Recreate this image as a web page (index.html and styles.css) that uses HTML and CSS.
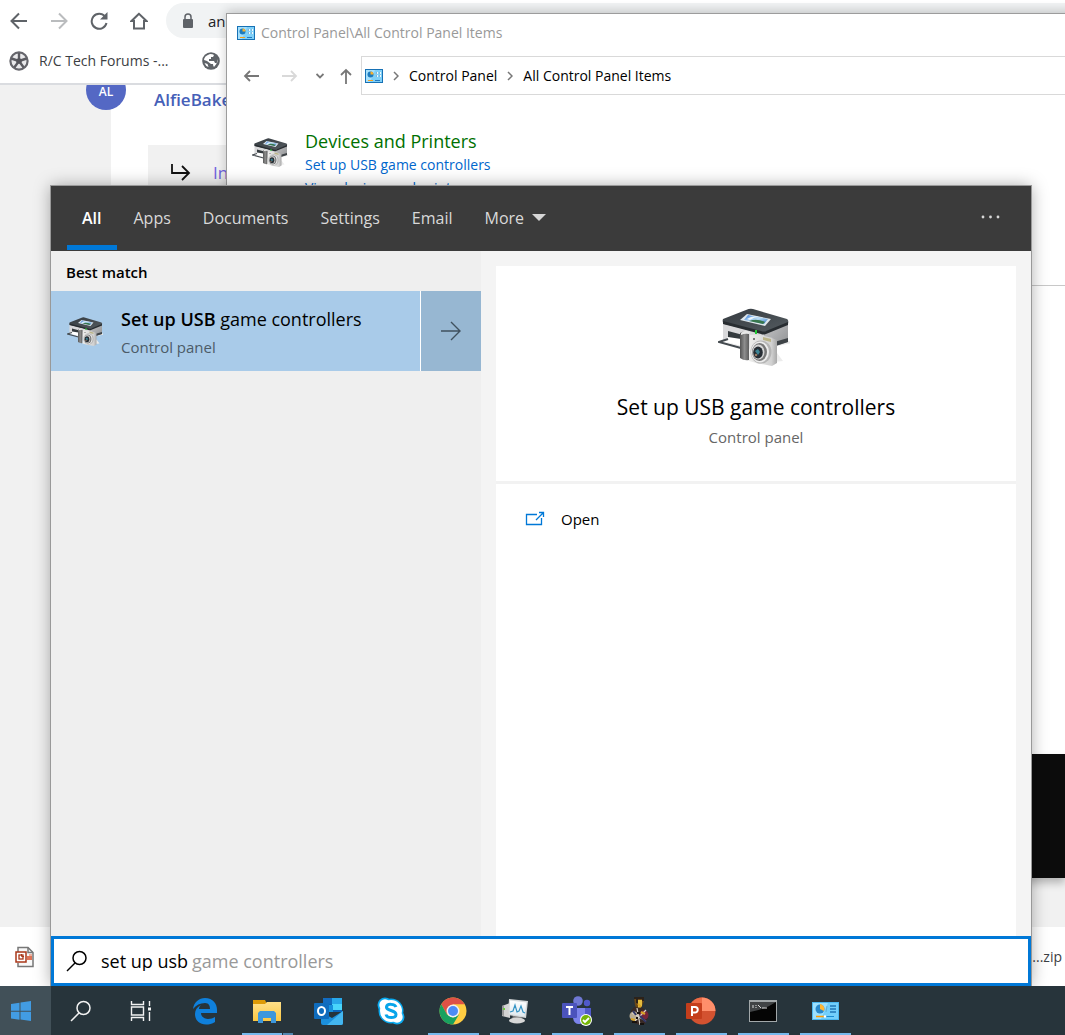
FILE: index.html
```html
<!DOCTYPE html>
<html lang="en">
<head>
<meta charset="utf-8">
<title>Search</title>
<link rel="stylesheet" href="styles.css">
</head>
<body>
<svg class="sprite" aria-hidden="true">
  <defs>
    <linearGradient id="side" x1="0" y1="0" x2="1" y2="1"><stop offset="0" stop-color="#c6c6c8"/><stop offset="1" stop-color="#8e9092"/></linearGradient>
    <linearGradient id="lid" x1="0" y1="0" x2="1" y2="1"><stop offset="0" stop-color="#343a3f"/><stop offset="1" stop-color="#555c61"/></linearGradient>
    <linearGradient id="cam" x1="0" y1="0" x2="1" y2="0"><stop offset="0" stop-color="#eeeeec"/><stop offset=".8" stop-color="#d2d2d2"/><stop offset="1" stop-color="#a9a9a9"/></linearGradient>
    <linearGradient id="grip" x1="0" y1="0" x2="1" y2="0"><stop offset="0" stop-color="#555"/><stop offset=".5" stop-color="#8d8d8d"/><stop offset="1" stop-color="#5d5d5d"/></linearGradient>
    <linearGradient id="sky" x1="0" y1="0" x2="1" y2="1"><stop offset="0" stop-color="#3f7fd6"/><stop offset=".5" stop-color="#b9dcf5"/><stop offset="1" stop-color="#2e74c4"/></linearGradient>
    <linearGradient id="folder" x1="0" y1="0" x2="0" y2="1"><stop offset="0" stop-color="#ffe08a"/><stop offset="1" stop-color="#fbc740"/></linearGradient>
    <linearGradient id="screen" x1="0" y1="0" x2="0" y2="1"><stop offset="0" stop-color="#fff"/><stop offset="1" stop-color="#dfe9ef"/></linearGradient>
  </defs>
  <symbol id="printer" viewBox="0 0 72 60">
    <path d="M38 56l27-3-6-8zM60 38l14-3-6-4z" fill="#ececec"/>
    <path d="M5 15L46 25v21L5 33z" fill="#d9d9db"/>
    <path d="M46 25l24-11v20L46 41z" fill="url(#side)"/>
    <path d="M46 37l24-7v4l-24 8z" fill="#3e4347"/>
    <path d="M5 11L28 2q4-2 7-1l34 10q2 1 1 5L47 24q-3 1-6 0L6 16q-2-2-1-5z" fill="url(#lid)"/>
    <path d="M5 13l38 10q3 1 5 0l22-9v3l-22 9q-3 1-5 0L5 16z" fill="#282d31"/>
    <path d="M29 6l24 5-6 7-25-6z" fill="#dfe7ec"/>
    <path d="M30 7l20 4-4 5-20-4z" fill="url(#sky)"/>
    <path d="M31 13q8-3 16 1l-2 2z" fill="#38774d"/><path d="M29 11q6-4 12-2-5 0-9 3z" fill="#eaf6fd"/>
    <path d="M10 23l15 4v8L10 31z" fill="#343a3e"/>
    <path d="M4 33l19 5v-7l-13-2z" fill="#fff"/>
    <path d="M10 31l-9 3 22 6" fill="none" stroke="#454b50" stroke-width="2.2"/>
    <path d="M38 22v4" stroke="#24cb35" stroke-width="2"/>
    <path d="M22 25q4-3 9-1v28q-5 1-9-2z" fill="url(#grip)"/>
    <path d="M23 25q4-4 9-1l-1 2q-4-1-8 1z" fill="#e8e8e8"/>
    <path d="M32 27q14-1 27 5v23l-5 3q-12-2-23-5z" fill="url(#cam)"/>
    <path d="M45 29l8 2v3l-8-2z" fill="#bbb488"/><circle cx="36" cy="31" r="1" fill="#555"/>
    <ellipse cx="43" cy="44" rx="10.500" ry="11.500" fill="#b5b5b5"/>
    <ellipse cx="42" cy="44" rx="9" ry="10.500" fill="#ececec"/>
    <ellipse cx="41.500" cy="44" rx="7.500" ry="9" fill="#777"/>
    <ellipse cx="40.500" cy="44" rx="6" ry="7.500" fill="#d4d4d4"/>
    <ellipse cx="40" cy="44.500" rx="4.800" ry="6" fill="#262d34"/>
    <path d="M37 43l3-2 2 3-2 3z" fill="#3c8494"/><circle cx="38" cy="47" r="1.300" fill="#9a7b64"/>
  </symbol>
  <symbol id="panel" viewBox="0 0 18 14">
    <path d="M0 0h18v14H0z" fill="#1771b5"/><path d="M1 1h16v12H1z" fill="#7fd0f8"/><path d="M1 1h9L5 13H1z" fill="#a5e0fc"/>
    <circle cx="5.500" cy="5.500" r="3" fill="#1c7bbf"/><path d="M5.500 5.500V2.500a3 3 0 0 1 3 3z" fill="#fbb22d"/>
    <path d="M11 3h2v2h-2zM14 3h2v2h-2zM11 6h2v2h-2zM14 6h2v2h-2z" fill="#eefaff"/><path d="M11 4h1M14 4h1M11 7h1M14 7h1" stroke="#1771b5"/>
    <path d="M3 11.500h5" stroke="#f6a21d"/><path d="M10 11.500h5" stroke="#2379c0"/>
  </symbol>
  <symbol id="glass" viewBox="0 0 22 22">
    <circle cx="13.500" cy="8" r="6.500" fill="none" stroke="currentColor" stroke-width="1.500"/><path d="M9 13l-8 8" stroke="currentColor" stroke-width="1.500"/>
  </symbol>
</svg>

<div class="desktop">
  <main class="workspace">
    <section class="browser" aria-label="Browser">
      <div class="toolbar">
        <button class="icon-btn" aria-label="Back"><svg width="18" height="18" viewBox="0 0 18 18"><path d="M17 9H2M9 1.500L1.500 9 9 16.500" fill="none" stroke="#5f6368" stroke-width="2"/></svg></button>
        <button class="icon-btn" aria-label="Forward"><svg width="18" height="18" viewBox="0 0 18 18"><path d="M1 9h15M9 1.500L16.500 9 9 16.500" fill="none" stroke="#babcbe" stroke-width="2"/></svg></button>
        <button class="icon-btn" aria-label="Reload"><svg width="18" height="18" viewBox="0 0 18 18"><path d="M15 4.500A7.500 7.500 0 1 0 16.500 11" fill="none" stroke="#5f6368" stroke-width="2"/><path d="M17.500 0v7.500H10z" fill="#5f6368"/></svg></button>
        <button class="icon-btn" aria-label="Home"><svg width="18" height="18" viewBox="0 0 18 18"><path d="M9 1.800L1.500 9H4v7.500h10V9h2.500z" fill="none" stroke="#5f6368" stroke-width="2"/></svg></button>
        <div class="omnibox"><svg width="12" height="16" viewBox="0 0 12 16"><rect x="1" y="6" width="10" height="9" rx="1" fill="#5f6368"/><path d="M3 6V4a3 3 0 0 1 6 0v2" fill="none" stroke="#5f6368" stroke-width="1.500"/></svg><span>an</span></div>
      </div>
      <div class="bookmarks">
        <a class="bookmark" href="#"><svg width="20" height="20" viewBox="0 0 20 20"><circle cx="10" cy="10" r="8.600" fill="#e9e9eb" stroke="#66666c" stroke-width="2.200"/><path d="M10 10V2M10 10L2.400 7.500M10 10l-4.700 6.500M10 10l4.700 6.500M10 10l7.600-2.500" stroke="#5c5c62" stroke-width="2.400"/><circle cx="10" cy="10" r="2.800" fill="#55555b"/></svg><span>R/C Tech Forums -...</span></a>
        <a class="bookmark" href="#" aria-label="Bookmark"><svg width="18" height="18" viewBox="0 0 18 18"><circle cx="9" cy="9" r="8.800" fill="#5f6368"/><path d="M8 2q3 0 4 1l-1 2H9v2H7v2h5l1 2h2q1-2 1-4-1 5-4 8-1-1-1-3H9L5 9 2 8q0-4 6-6zM2.500 11l3 1 1 3q-3-1-4-4z" fill="#fff"/></svg></a>
      </div>
      <div class="page">
        <div class="avatar">AL</div>
        <article class="post">
          <a class="author" href="#">AlfieBaker</a>
          <div class="reply"><svg width="21" height="18" viewBox="0 0 21 18"><path d="M2 0v9h17M12 2l7 7-7 7" fill="none" stroke="#111" stroke-width="1.800"/></svg><a href="#">In</a></div>
        </article>
      </div>
      <div class="downloads">
        <svg width="20" height="22" viewBox="0 0 20 22"><path d="M3 6V1.500h10l5 5v14H3V17" fill="#f8f8f8" stroke="#777" stroke-width="1.500"/><path d="M13 1.500v5h5" fill="none" stroke="#777" stroke-width="1.500"/><path d="M12 10h3V8h2v6h-5z" fill="#dd7357"/><path d="M14 8h3v2h-3z" fill="#eeb09e"/><rect x="1" y="6" width="10" height="10" fill="#fff" stroke="#a93719" stroke-width="1.500"/><rect x="4" y="9" width="4" height="4" fill="none" stroke="#a93719" stroke-width="1.300"/><path d="M6.500 8v2.500H9" stroke="#a93719" fill="none"/></svg>
        <span>....zip</span>
      </div>
    </section>

    <div class="terminal"></div>

    <section class="control" aria-label="Control Panel">
      <div class="titlebar"><svg width="18" height="14"><use href="#panel"/></svg><span>Control Panel\All Control Panel Items</span></div>
      <div class="navbar">
        <button class="nav-btn" aria-label="Back"><svg width="16" height="12" viewBox="0 0 16 12"><path d="M16 6H2M7 1L2 6l5 5" fill="none" stroke="#777" stroke-width="1.800"/></svg></button>
        <button class="nav-btn" aria-label="Forward"><svg width="16" height="12" viewBox="0 0 16 12"><path d="M0 6h14M9 1l5 5-5 5" fill="none" stroke="#d9d9d9" stroke-width="1.800"/></svg></button>
        <button class="nav-btn small" aria-label="Recent"><svg width="8" height="6" viewBox="0 0 8 6"><path d="M.5 1L4 4.500 7.500 1" fill="none" stroke="#777" stroke-width="1.800"/></svg></button>
        <button class="nav-btn up" aria-label="Up"><svg width="12" height="16" viewBox="0 0 12 16"><path d="M6 16V2M1 7l5-5 5 5" fill="none" stroke="#777" stroke-width="1.800"/></svg></button>
        <nav class="address" aria-label="Path">
          <svg width="18" height="14"><use href="#panel"/></svg>
          <svg width="6" height="10" viewBox="0 0 6 10"><path d="M1 1l4 4-4 4" fill="none" stroke="#777" stroke-width="1.500"/></svg>
          <a href="#">Control Panel</a>
          <svg width="6" height="10" viewBox="0 0 6 10"><path d="M1 1l4 4-4 4" fill="none" stroke="#777" stroke-width="1.500"/></svg>
          <a href="#">All Control Panel Items</a>
        </nav>
      </div>
      <div class="category">
        <svg width="36" height="30"><use href="#printer"/></svg>
        <div class="links"><h2>Devices and Printers</h2><a href="#">Set up USB game controllers</a><a href="#">View devices and printers</a></div>
      </div>
    </section>

    <section class="search" aria-label="Search">
      <header class="tabs">
        <button class="tab active">All</button>
        <button class="tab">Apps</button>
        <button class="tab">Documents</button>
        <button class="tab">Settings</button>
        <button class="tab">Email</button>
        <button class="tab">More <svg width="14" height="8" viewBox="0 0 14 8"><path d="M0 0h14L7 7z" fill="#d6d6d6"/></svg></button>
        <button class="dots" aria-label="Options"><svg width="20" height="4" viewBox="0 0 20 4"><g fill="#d8d8d8"><circle cx="2" cy="2" r="1.400"/><circle cx="9.500" cy="2" r="1.400"/><circle cx="17" cy="2" r="1.400"/></g></svg></button>
      </header>
      <div class="results">
        <div class="matches">
          <h3>Best match</h3>
          <div class="match">
            <button class="match-main"><svg width="36" height="30"><use href="#printer"/></svg><span class="match-text"><span class="match-name"><b>Set up USB</b> game controllers</span><span class="match-kind">Control panel</span></span></button>
            <button class="match-more" aria-label="Show details"><svg width="20" height="20" viewBox="0 0 20 20"><path d="M0 10h19M10 1l9 9-9 9" fill="none" stroke="#40515f" stroke-width="1.400"/></svg></button>
          </div>
        </div>
        <div class="detail">
          <div class="hero">
            <svg width="72" height="60"><use href="#printer"/></svg>
            <h1>Set up USB game controllers</h1>
            <p>Control panel</p>
          </div>
          <div class="actions"><button class="open"><svg width="20" height="16" viewBox="0 0 20 16"><path d="M12 3.500H1.500v10h15V7M11 9l7-7M14 1.500H18.500V6" fill="none" stroke="#0078d7" stroke-width="1.300"/></svg>Open</button></div>
        </div>
      </div>
      <label class="query"><svg width="22" height="22"><use href="#glass"/></svg><input type="text" value="set up usb" aria-label="Search"><span>game controllers</span></label>
    </section>
  </main>

  <footer class="taskbar">
    <button class="start" aria-label="Start"><svg width="20" height="20" viewBox="0 0 20 20"><path d="M0 3l8.500-1.300v8H0zM9.500 1.500L20 0v9.700H9.500zM0 10.700h8.500v8L0 17.400zM9.500 10.700H20V20L9.500 18.600z" fill="#429ce3"/></svg></button>
    <button class="tool" aria-label="Search"><svg width="22" height="22"><use href="#glass"/></svg></button>
    <button class="tool" aria-label="Task view"><svg width="22" height="20" viewBox="0 0 22 20"><path d="M1.500 0v3.500h12V0M1.500 20v-3.500h12V20M1.500 6h12v8h-12zM19.500 0v5M19.500 11v9" fill="none" stroke="#f2f2f2" stroke-width="1.400"/><path d="M18 6.500h3v3h-3z" fill="#f2f2f2"/></svg></button>
    <div class="apps">
      <button class="app" aria-label="Edge"><svg width="26" height="28" viewBox="0 0 26 28"><path d="M1 12C2 5 7 1 13 1c8 0 12 6 12 12v3H9c0 4 4 6 7 6 3 0 5-1 7-2v5c-3 2-6 2.500-9 2.500C7 27.500 3 23 3 17c0-4 2-7 6-9-2 2-2 3-2 4h11c0-3-1-6-5-6-5 0-9 2-12 6z" fill="#0f80dc"/></svg></button>
      <button class="app running stacked" aria-label="File Explorer"><svg width="28" height="24" viewBox="0 0 28 24"><path d="M0 1h12l2 4-2 3H0z" fill="#dd9a07"/><path d="M0 5h12l2-2h14v19H0z" fill="url(#folder)"/><path d="M5 24V14l2-2h14l2 2v10h-5v-5h-8v5z" fill="#3d97dc"/></svg></button>
      <button class="app" aria-label="Outlook"><svg width="30" height="28" viewBox="0 0 30 28"><path d="M9 1h19v14H9z" fill="#0a63b8"/><path d="M9 1h9v6H9z" fill="#126cc0"/><path d="M18 1h10v6H18z" fill="#28a8ea"/><path d="M18 7h10v6H18z" fill="#49d5fb"/><path d="M12 8h7v7h-7z" fill="#1590dd"/><path d="M7 15l11 6 11-7v12q0 2-2 2H9q-2 0-2-2z" fill="#1b8fdc"/><path d="M29 14L13 28h14q2 0 2-2z" fill="#43b6ef"/><rect y="6" width="15" height="16" rx="1" fill="#0f6cbd"/><ellipse cx="7.500" cy="14" rx="3.500" ry="4" fill="none" stroke="#fff" stroke-width="2"/></svg></button>
      <button class="app" aria-label="Skype"><svg width="28" height="28" viewBox="0 0 28 28"><g fill="#09a9ef"><circle cx="14" cy="14" r="12.500"/><circle cx="8" cy="8" r="7.500"/><circle cx="20" cy="20" r="7.500"/></g><g fill="#fff"><circle cx="14" cy="14" r="11"/><circle cx="8" cy="8" r="5.700"/><circle cx="20" cy="20" r="5.700"/></g><path d="M19 10c-1-3-9-4-9.500 0-.5 4 9.500 3 9.500 7.500 0 4-9 4-10 0" fill="none" stroke="#08a5ea" stroke-width="3"/></svg></button>
      <button class="app running" aria-label="Chrome"><svg width="28" height="28" viewBox="0 0 28 28"><circle cx="14" cy="14" r="13.500" fill="#ffcd42"/><path d="M2.300 7.200A13.500 13.500 0 0 1 25.700 7.200H14L8 17.500z" fill="#de5145"/><path d="M2.300 7.200A13.500 13.500 0 0 0 14 27.500l6-10-6 3-6-3z" fill="#18a15f"/><circle cx="14" cy="14" r="6.500" fill="#f1f1f1"/><circle cx="14" cy="14" r="5" fill="#4c8bf5"/></svg></button>
      <button class="app running" aria-label="Performance Monitor"><svg width="28" height="26" viewBox="0 0 28 26"><path d="M1 8l8-3v15l-8-2z" fill="#d3d3d3"/><path d="M1 8l2-1v11l-2-.5z" fill="#999"/><path d="M2 11h2" stroke="#68ca3b" stroke-width="2"/><path d="M12 17h8l1 4H11z" fill="#777"/><ellipse cx="16" cy="22.500" rx="8" ry="3" fill="#d7d7d7"/><path d="M8 1l19 2-2 17-18-3z" fill="#d5d8d9"/><path d="M9 2.500l16.500 2-2 14L8.500 16z" fill="url(#screen)"/><path d="M9 14l3-1 2-6 2 7 2-1 2-5 2 6 2 1" fill="none" stroke="#3594c5" stroke-width="1.200"/></svg></button>
      <button class="app running" aria-label="Teams"><svg width="32" height="30" viewBox="0 0 32 30"><circle cx="17" cy="5" r="4.800" fill="#6f78d4"/><circle cx="26" cy="7" r="3.200" fill="#5059c9"/><path d="M21 12h9v8q0 5-5 5h-4z" fill="#5059c9"/><path d="M12 12h12v10q-1 6-6 6t-6-6z" fill="#7b83eb"/><rect x="1" y="7" width="15" height="15" rx="1" fill="#4b53bc"/><path d="M5 11h7M8.500 11v8" stroke="#fff" stroke-width="2"/><circle cx="25" cy="24" r="6" fill="#fff"/><circle cx="25" cy="24" r="5" fill="#75b508"/><path d="M22 24l2 2 4-4" fill="none" stroke="#fff" stroke-width="1.800"/></svg></button>
      <button class="app running" aria-label="Game"><svg width="20" height="30" viewBox="0 0 20 30"><path d="M5 1h10v4l-2 5-2 4H8l-2-5z" fill="#6b4918"/><path d="M9 4h4v6l-4 3z" fill="#e3bd40"/><path d="M5 1h10v2H5zM7 2h2v5H7zM13 2h2v3h-2z" fill="#2b221a"/><path d="M5 11l9 1 3 5 2 5-3 6-5 1-6-2-4-5 1-7z" fill="#382924"/><circle cx="5" cy="20" r="4.500" fill="#b9ac92"/><circle cx="15" cy="19" r="4.500" fill="#77253a"/><path d="M3 17l14 8M17 14L5 26M8 12l3 17" stroke="#d8d2c8" stroke-width="1.200"/><path d="M2 23l4 1M12 16l4 2M9 8l3 3" stroke="#d9a425" stroke-width="2"/><path d="M11 20l6 6M4 15l3 4" stroke="#313767" stroke-width="2"/><path d="M3 26h5M11 28h4M7 22h2M8 17h3" stroke="#17120f" stroke-width="2"/></svg></button>
      <button class="app running" aria-label="PowerPoint"><svg width="30" height="28" viewBox="0 0 30 28"><circle cx="16" cy="14" r="13.500" fill="#d35230"/><path d="M16 .5A13.500 13.500 0 0 0 2.500 14H16z" fill="#ed6c47"/><path d="M16 .5A13.500 13.500 0 0 1 29.500 14H16z" fill="#ff8f6b"/><rect y="6" width="16" height="16" rx="1" fill="#c43e1c"/><path d="M6 19V10h3a2.500 2.500 0 0 1 0 5.500H6" fill="none" stroke="#fff" stroke-width="2"/></svg></button>
      <button class="app running" aria-label="Command Prompt"><svg width="28" height="22" viewBox="0 0 28 22"><path d="M0 0h28v22H0z" fill="#a2a8aa"/><path d="M1 2h26v19H1z" fill="#050505"/><path d="M1 2h26q-10 7-26 10z" fill="#414446"/><path d="M4 5v3M7 5v1M7 7v1M9 5l3 3M13 8h5" stroke="#ddd" fill="none"/></svg></button>
      <button class="app running" aria-label="Control Panel"><svg width="27" height="18" viewBox="0 0 27 18"><path d="M0 0h27v18H0z" fill="#4cb7ef"/><path d="M1 1h25v16H1z" fill="#72cffb"/><path d="M1 1h15L9 17H1z" fill="#9be0ff"/><circle cx="8" cy="7" r="4.500" fill="#2788cb"/><path d="M8 7V2a5 5 0 0 1 4 7z" fill="#ffb735"/><path d="M18 4h6M18 7h6M18 10h6" stroke="#2177b7" stroke-width="1.500"/><path d="M15 4l-1 6" stroke="#62aed5"/><path d="M4 14.500h8" stroke="#ff9d00" stroke-width="1.500"/><path d="M14 14.500h8" stroke="#188bd1"/><circle cx="13" cy="14.500" r="1.200" fill="#fff"/></svg></button>
    </div>
  </footer>
</div>
</body>
</html>
```

FILE: styles.css
```css
* { box-sizing: border-box; }
body { margin: 0; font: 14px/20px "Open Sans", "Noto Sans", sans-serif; color: #000; }
button { border: 0; padding: 0; margin: 0; background: none; font: inherit; color: inherit; display: flex; align-items: center; justify-content: center; }
a { text-decoration: none; color: inherit; }
h1, h2, h3, p { margin: 0; font-weight: 400; }
svg { display: block; flex: none; }
.sprite { position: absolute; width: 0; height: 0; }

.desktop { display: flex; flex-direction: column; height: 100vh; overflow: hidden; }
.workspace { position: relative; flex: 1; min-height: 0; overflow: hidden; }

/* Browser at the back */
.browser { display: flex; flex-direction: column; height: 100%; background: #fff; }
.toolbar { display: flex; align-items: center; height: 41px; padding-left: 9px; }
.icon-btn { width: 20px; margin-right: 20px; height: 20px; }
.omnibox { flex: 1; display: flex; align-items: center; gap: 14px; height: 35px; margin: 0 -20px 0 -3px; padding-left: 16px; border-radius: 18px; background: #f1f3f4; font-size: 15px; color: #202124; }
.bookmarks { display: flex; align-items: center; gap: 33px; height: 44px; padding: 0 9px 3px; border-bottom: 2px solid #dadce0; color: #3c4043; }
.bookmark { display: flex; align-items: center; gap: 10px; }
.page { flex: 1; min-height: 0; position: relative; padding: 0 0 49px 111px; background: #f1f1f1; overflow: hidden; }
.avatar { position: absolute; left: 86px; top: -15px; display: flex; align-items: flex-end; justify-content: center; width: 40px; height: 40px; padding-bottom: 12px; border-radius: 50%; background: #5468c4; color: #fff; font-size: 12px; font-weight: 600; line-height: 12px; }
.post { height: 100%; padding: 5px 0 0 37px; background: #fff; }
.author { display: block; padding-left: 6px; font-size: 17px; font-weight: 600; color: #4660b8; }
.reply { display: flex; align-items: center; gap: 22px; height: 56px; margin-top: 35px; padding-left: 22px; background: #f1f1f1; font-size: 17px; color: #7062e0; }
.downloads { display: flex; align-items: center; justify-content: space-between; height: 59px; padding: 0 3px 0 15px; color: #3c4043; }

.terminal { position: absolute; left: 500px; right: 0; bottom: 108px; height: 124px; background: #0c0c0c; box-shadow: 0 5px 8px rgba(0, 0, 0, .25); }

/* Control Panel window */
.control { position: absolute; left: 226px; right: -20px; top: 13px; height: 273px; border: 1px solid #9c9c9c; border-bottom-color: #c8c8c8; background: #fff; box-shadow: 0 -2px 10px rgba(0, 0, 0, .2); clip-path: inset(-20px 0 0 -20px); }
.titlebar { display: flex; align-items: center; gap: 6px; height: 38px; padding-left: 10px; color: #999; }
.navbar { display: flex; align-items: center; height: 47px; padding: 4px 0 4px 4px; }
.nav-btn { width: 39px; }
.nav-btn.small { width: 21px; }
.nav-btn.up { width: 31px; }
.address { display: flex; align-items: center; gap: 10px; flex: 1; height: 39px; padding-left: 3px; border: 1px solid #d9d9d9; }
.category { display: flex; gap: 17px; padding: 31px 25px; }
.category > svg { margin-top: 8px; }
.links { display: flex; flex-direction: column; gap: 3px; color: #0066cc; }
.links h2 { font-size: 18px; line-height: 22px; color: #007000; }

/* Search flyout */
.search { position: absolute; left: 51px; right: 34px; top: 186px; bottom: 0; display: flex; flex-direction: column; box-shadow: 0 0 0 1px #999, 0 0 16px rgba(0, 0, 0, .35); background: #f4f4f4; }
.tabs { display: flex; gap: 2px; height: 65px; padding-left: 16px; background: #3b3b3b; color: #d9d9d9; font-size: 16px; }
.tab { height: 64px; padding: 0 15px; gap: 8px; border-bottom: 5px solid transparent; border-top: 4px solid transparent; }
.tab.active { border-bottom-color: #0078d7; color: #fff; font-weight: 600; }
.dots { margin-left: auto; padding: 0 30px; height: 62px; }
.results { display: flex; flex: 1; min-height: 0; }
.matches { width: 430px; background: #efefef; }
.matches h3 { padding: 2px 0 0 15px; font-size: 15px; line-height: 38px; height: 40px; font-weight: 600; }
.match { display: flex; gap: 1px; height: 80px; background: #fff; }
.match-main { flex: 1; justify-content: flex-start; gap: 18px; padding: 2px 0 0 16px; background: #a9cbe9; text-align: left; }
.match-text { display: flex; flex-direction: column; gap: 6px; }
.match-name { font-size: 18px; line-height: 24px; }
.match-name b { font-weight: 600; }
.match-kind { font-size: 15px; color: #4c5b68; }
.match-more { width: 60px; background: #97b7d2; }
.detail { flex: 1; display: flex; flex-direction: column; margin: 15px 15px 0; background: #fff; }
.hero { display: flex; flex-direction: column; align-items: center; height: 218px; padding-top: 42px; border-bottom: 3px solid #f2f2f2; }
.hero > svg { margin-right: 4px; }
.hero h1 { margin-top: 25px; font-size: 21px; line-height: 28px; }
.hero p { margin-top: 6px; font-size: 15px; color: #666; }
.actions { padding: 25px 29px; }
.open { gap: 16px; font-size: 15px; }
.query { display: flex; align-items: center; height: 50px; padding-left: 12px; border: 3px solid #0078d7; background: #fff; font-size: 18px; color: #000; }
.query input { width: 91px; margin-left: 13px; padding: 0; border: 0; outline: 0; background: none; font: inherit; color: #000; }
.query span { color: #999; }

/* Taskbar */
.taskbar { display: flex; height: 49px; background: #27343b; color: #f2f2f2; }
.start { width: 51px; padding-right: 9px; background: #415058; }
.tool { width: 60px; }
.apps { display: flex; margin-left: 3px; }
.app { width: 62px; height: 49px; position: relative; }
.app.running::after { content: ""; position: absolute; left: 6px; right: 5px; bottom: 0; height: 2px; background: #76b9ed; }
.app.stacked::after { background: linear-gradient(90deg, #76b9ed 40px, #27343b 40px, #27343b 41px, #5287b0 41px); }
```
